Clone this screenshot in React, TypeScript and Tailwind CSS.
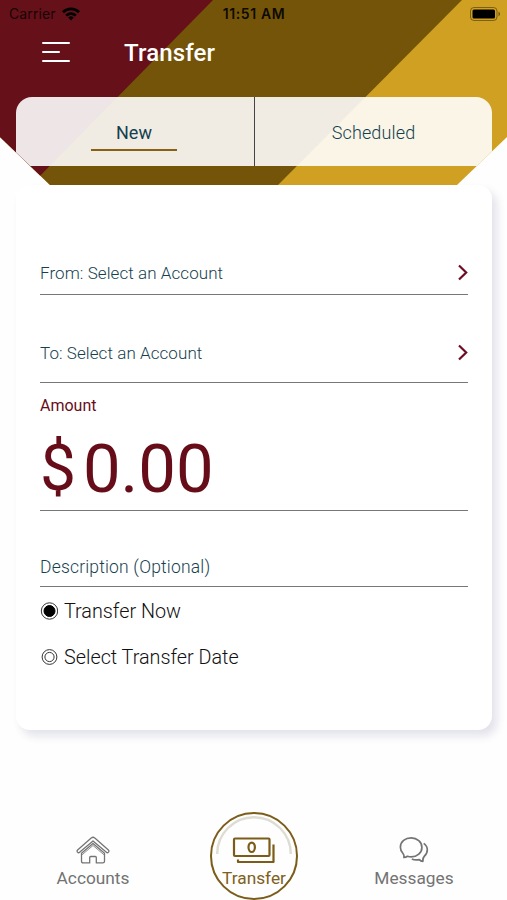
import type { ReactNode } from 'react';
import clsx from 'clsx';

function StatusBar() {
  return (
    <div className="grid h-7 grid-cols-[1fr_auto_1fr] items-center pl-[9px] pr-[6px] font-['Inter'] text-[14px] leading-none text-black/80">
      <div className="flex items-center gap-[6px]">
        <span className="tracking-[0.1px]">Carrier</span>
        <svg width="18" height="14" viewBox="0 0 18 14" fill="none" stroke="black" strokeWidth="2.7">
          <path d="M1 5.2a11.4 11.4 0 0 1 16 0" />
          <path d="M4.2 8.6a6.8 6.8 0 0 1 9.6 0" />
          <path d="M9 13.4 6.2 10.6a4 4 0 0 1 5.6 0Z" fill="black" stroke="none" />
        </svg>
      </div>
      <span className="mr-[2px] text-[14px] font-semibold tracking-[0.6px] text-black/90">11:51 AM</span>
      <svg className="justify-self-end" width="31" height="14" viewBox="0 0 31 14">
        <rect x="0.5" y="0.5" width="26.5" height="13" rx="3.5" fill="none" stroke="black" strokeOpacity="0.4" />
        <rect x="2.5" y="2.5" width="22.5" height="9" rx="1.5" fill="black" />
        <path d="M28.5 4.8v4.4c1-.4 1.6-1.2 1.6-2.2s-.6-1.8-1.6-2.2Z" fill="black" fillOpacity="0.45" />
      </svg>
    </div>
  );
}

function Header() {
  return (
    <header className="relative h-[185px] bg-[#cfa022] [clip-path:polygon(0_0,100%_0,100%_137px,457px_100%,50px_100%,0_137px)]">
      {/* Diagonal colour bands */}
      <div className="absolute inset-0 bg-[#735409] [clip-path:polygon(0_0,462px_0,278px_100%,0_100%)]" />
      <div className="absolute inset-0 bg-[#661019] [clip-path:polygon(0_0,213px_0,31px_100%,0_100%)]" />

      <div className="relative">
        <StatusBar />
        <div className="flex h-[69px] pl-[42px]">
          <button className="mt-[14px] flex h-5 w-7 flex-col justify-between" aria-label="Menu">
            <span className="h-[2px] w-7 rounded-full bg-white" />
            <span className="h-[2px] w-[18px] rounded-full bg-white" />
            <span className="h-[2px] w-7 rounded-full bg-white" />
          </button>
          <h1 className="ml-[54px] mt-[9px] text-[24px] font-medium leading-8 tracking-[0.15px] text-white">Transfer</h1>
        </div>
        <div className="ml-4 mr-[15px] grid h-[69px] grid-cols-[239px_1fr] overflow-hidden rounded-t-2xl bg-white/[0.89] text-[18px]">
          <button className="flex flex-col items-center border-r border-[#444] pr-[2px] pt-[24px] leading-6 text-[#143f50]">
            New
            <span className="mt-[4px] h-[2px] w-[86px] bg-[#876010]" />
          </button>
          <button className="flex justify-center pt-[24px] font-light leading-6 tracking-[0.15px] text-[#143f50]">
            Scheduled
          </button>
        </div>
      </div>
    </header>
  );
}

function AccountRow({ label, className }: { label: string; className: string }) {
  return (
    <button className={clsx('flex w-full justify-between border-b border-[#777] text-left', className)}>
      <span className="text-[17px] font-light leading-6 tracking-[0.07px] text-[#173f50]">{label}</span>
      <svg className="mt-[3px]" width="10" height="17" viewBox="0 0 10 17" fill="none" stroke="#6f0c24" strokeWidth="2.2">
        <path d="m1 1.5 7.2 7-7.2 7" />
      </svg>
    </button>
  );
}

function RadioRow({ label, checked }: { label: string; checked?: boolean }) {
  return (
    <label className="flex items-center gap-[6px] text-[19.8px] font-light leading-6 text-[#111]">
      <svg className="-mt-[2px]" width="18" height="18" viewBox="0 0 18 18" fill="none" stroke="#333">
        <circle cx="9.5" cy="9" r={checked ? 8.2 : 7.4} />
        {checked ? <circle cx="9.5" cy="9" r="5.5" fill="black" stroke="black" /> : <circle cx="9.5" cy="9" r="4.6" />}
      </svg>
      {label}
    </label>
  );
}

function TransferCard() {
  return (
    <main className="ml-4 mr-[15px] h-[545px] rounded-[14px] bg-white px-6 shadow-[5px_6px_9px_rgba(60,60,120,0.14)]">
      <AccountRow label="From: Select an Account" className="h-[110px] pt-[76px]" />
      <AccountRow label="To: Select an Account" className="h-[88px] pt-[46px]" />
      <div className="h-32 border-b border-[#777] pt-[11px] text-[#660d19]">
        <div className="text-[16px] leading-6">Amount</div>
        <div className="mt-[13px] flex h-[76px] items-center gap-[7px] text-[67px] leading-none">
          <span className="text-[64px]">$</span>
          <span>0.00</span>
        </div>
      </div>
      <div className="h-[76px] border-b border-[#777] pt-11 text-[17.5px] font-light leading-6 tracking-[0.18px] text-[#173f50]">
        Description (Optional)
      </div>
      <div className="flex flex-col gap-[22px] pt-[13px]">
        <RadioRow label="Transfer Now" checked />
        <RadioRow label="Select Transfer Date" />
      </div>
    </main>
  );
}

function NavItem({ label, children }: { label: string; children: ReactNode }) {
  return (
    <button className="flex flex-col items-center pt-[26px] text-[17.3px] leading-6 text-[#737373]">
      <span className="h-[30px]">{children}</span>
      {label}
    </button>
  );
}

function BottomNav() {
  return (
    <nav className="mt-20 grid h-[90px] grid-cols-[186px_136px_184px]">
      <NavItem label="Accounts">
        <svg width="34" height="29" viewBox="0 0 34 29" fill="none" stroke="#747474" strokeWidth="1.3" strokeLinejoin="round">
          <path d="M15.2 2.1q1.8-1.7 3.6 0L32.4 14q1 1 .1 2.1-1 1.1-2.1.2L17 4.9 3.6 16.3q-1.1.9-2.1-.2-.9-1.1.1-2.1Z" />
          <path d="M5.5 17.2 17 7.4l11.5 9.8v8q0 1.7-1.7 1.7h-6.5v-5.5q0-.9-.9-.9h-4.8q-.9 0-.9.9v5.5H7.2q-1.7 0-1.7-1.7Z" />
          <path d="m6 18.8 11-9.3 11 9.3" strokeWidth="0.8" />
        </svg>
      </NavItem>
      <button className="mt-[2px] flex h-[88px] w-[88px] flex-col items-center justify-self-center rounded-full border-2 border-[#7b5c18] text-[17.3px] leading-6 text-[#80601c]">
        <svg className="mt-[2px] shrink-0" width="76" height="50" viewBox="0 0 76 50" fill="none">
          <path d="M1.2 38a36.8 36.8 0 0 1 73.6 0" stroke="#deddd3" strokeWidth="2.4" />
          <g stroke="#7b5c18" strokeWidth="2.2" strokeLinejoin="round">
            <rect x="18" y="22.5" width="35.5" height="17.5" rx="1" />
            <ellipse cx="35.7" cy="31.3" rx="3.2" ry="4.7" />
            <path d="M57.5 28.5V46H22v-2.5" />
          </g>
        </svg>
        Transfer
      </button>
      <NavItem label="Messages">
        <svg width="30" height="29" viewBox="0 0 30 29" fill="none" stroke="#747474" strokeWidth="1.7" strokeLinejoin="round">
          <path d="M4 17.5C2.2 15.7 1.4 13.6 1.4 11.3 1.4 5.6 6.3 1.9 12.2 1.9s10.7 4.1 10.7 9.5-4.8 9.5-10.6 9.5c-1.4 0-2.6-.2-3.8-.6-1.2.9-2.3 1.2-3.6 1.2.4-1.4.3-2.5-.9-4Z" />
          <path d="M24.7 7.4c2.3 1.6 3.6 3.8 3.6 6.4 0 2.6-1 4.6-2.8 6.2-1.4 1.2-1.6 2.3-1.7 5.4-1.6-.2-2.6-.8-3.5-1.8-2.7.6-5.3.4-7.5-.7" />
        </svg>
      </NavItem>
    </nav>
  );
}

export default function App() {
  return (
    <div className="h-[900px] w-[507px] overflow-hidden bg-[#fefefe] font-['Roboto',sans-serif]">
      <Header />
      <TransferCard />
      <BottomNav />
    </div>
  );
}
